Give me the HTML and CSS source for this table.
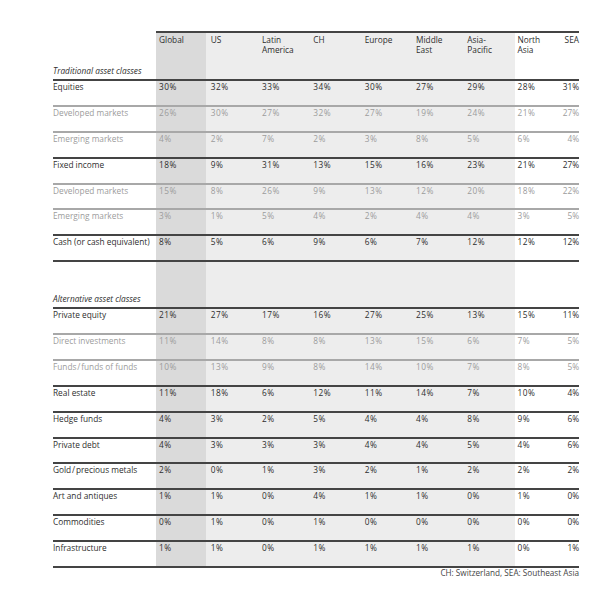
FILE: index.html
```html
<!DOCTYPE html>
<html lang="en">
<head>
<meta charset="utf-8">
<title>Asset allocation by region</title>
<link rel="stylesheet" href="styles.css">
</head>
<body>
<div class="table">
  <div class="head">
    <span class="cap">Traditional asset classes</span>
    <span>Global</span><span>US</span><span>Latin<br>America</span><span>CH</span><span>Europe</span><span>Middle<br>East</span><span>Asia-<br>Pacific</span><span>North<br>Asia</span><span>SEA</span>
  </div>
  <div class="row"><span>Equities</span><span>30%</span><span>32%</span><span>33%</span><span>34%</span><span>30%</span><span>27%</span><span>29%</span><span>28%</span><span>31%</span></div>
  <div class="row sub"><span>Developed markets</span><span>26%</span><span>30%</span><span>27%</span><span>32%</span><span>27%</span><span>19%</span><span>24%</span><span>21%</span><span>27%</span></div>
  <div class="row sub"><span>Emerging markets</span><span>4%</span><span>2%</span><span>7%</span><span>2%</span><span>3%</span><span>8%</span><span>5%</span><span>6%</span><span>4%</span></div>
  <div class="row"><span>Fixed income</span><span>18%</span><span>9%</span><span>31%</span><span>13%</span><span>15%</span><span>16%</span><span>23%</span><span>21%</span><span>27%</span></div>
  <div class="row sub"><span>Developed markets</span><span>15%</span><span>8%</span><span>26%</span><span>9%</span><span>13%</span><span>12%</span><span>20%</span><span>18%</span><span>22%</span></div>
  <div class="row sub"><span>Emerging markets</span><span>3%</span><span>1%</span><span>5%</span><span>4%</span><span>2%</span><span>4%</span><span>4%</span><span>3%</span><span>5%</span></div>
  <div class="row"><span>Cash (or cash equivalent)</span><span>8%</span><span>5%</span><span>6%</span><span>9%</span><span>6%</span><span>7%</span><span>12%</span><span>12%</span><span>12%</span></div>
  <div class="section"><span class="cap">Alternative asset classes</span></div>
  <div class="row"><span>Private equity</span><span>21%</span><span>27%</span><span>17%</span><span>16%</span><span>27%</span><span>25%</span><span>13%</span><span>15%</span><span>11%</span></div>
  <div class="row sub"><span>Direct investments</span><span>11%</span><span>14%</span><span>8%</span><span>8%</span><span>13%</span><span>15%</span><span>6%</span><span>7%</span><span>5%</span></div>
  <div class="row sub"><span>Funds&#8202;/&#8202;funds of funds</span><span>10%</span><span>13%</span><span>9%</span><span>8%</span><span>14%</span><span>10%</span><span>7%</span><span>8%</span><span>5%</span></div>
  <div class="row"><span>Real estate</span><span>11%</span><span>18%</span><span>6%</span><span>12%</span><span>11%</span><span>14%</span><span>7%</span><span>10%</span><span>4%</span></div>
  <div class="row"><span>Hedge funds</span><span>4%</span><span>3%</span><span>2%</span><span>5%</span><span>4%</span><span>4%</span><span>8%</span><span>9%</span><span>6%</span></div>
  <div class="row"><span>Private debt</span><span>4%</span><span>3%</span><span>3%</span><span>3%</span><span>4%</span><span>4%</span><span>5%</span><span>4%</span><span>6%</span></div>
  <div class="row"><span>Gold&#8202;/&#8202;precious metals</span><span>2%</span><span>0%</span><span>1%</span><span>3%</span><span>2%</span><span>1%</span><span>2%</span><span>2%</span><span>2%</span></div>
  <div class="row"><span>Art and antiques</span><span>1%</span><span>1%</span><span>0%</span><span>4%</span><span>1%</span><span>1%</span><span>0%</span><span>1%</span><span>0%</span></div>
  <div class="row"><span>Commodities</span><span>0%</span><span>1%</span><span>0%</span><span>1%</span><span>0%</span><span>0%</span><span>0%</span><span>0%</span><span>0%</span></div>
  <div class="row end"><span>Infrastructure</span><span>1%</span><span>1%</span><span>0%</span><span>1%</span><span>1%</span><span>1%</span><span>1%</span><span>0%</span><span>1%</span></div>
</div>
<p class="note">CH: Switzerland, SEA: Southeast Asia</p>
</body>
</html>
```

FILE: styles.css
```css
html, body {
  margin: 0;
  padding: 0;
  background: #ffffff;
}

body {
  font-family: "Open Sans", "Noto Sans", "Liberation Sans", sans-serif;
  font-size: 8.3px;
  line-height: 10px;
  color: #2e2e2e;
}

.table {
  margin: 31px 0 0 53px;
  width: 526px;
  background: linear-gradient(to right,
    transparent 103px,
    #dadada 103px, #dadada 153px,
    #ededed 153px, #ededed 462px,
    transparent 462px);
}

.head,
.row {
  display: grid;
  grid-template-columns: 103px 50px repeat(6, 51.33px) 1fr 1fr;
  box-sizing: border-box;
}

.head {
  height: 48px;
}

.head > span {
  border-top: 2px solid #444444;
  padding-top: 2px;
}

.head > .cap {
  border-top: none;
  align-self: end;
  padding: 0 0 3px 0;
}

.cap {
  font-style: italic;
  white-space: nowrap;
}

.row {
  height: 25.88px;
  border-top: 2px solid #444444;
  padding-top: 1px;
  white-space: nowrap;
}

.row > :nth-child(n+2) {
  letter-spacing: 0.5px;
}

.row.sub {
  border-top-color: #a8a8a8;
  color: #9c9c9c;
}

.row.end {
  height: 27.88px;
  border-bottom: 2px solid #444444;
}

.head > :nth-child(2),
.row > :nth-child(2) {
  padding-left: 3px;
}

.head > :nth-child(n+3),
.row > :nth-child(n+3) {
  padding-left: 4.7px;
}

.head > :nth-child(9),
.row > :nth-child(9) {
  padding-left: 3.5px;
}

.head > :nth-child(10),
.row > :nth-child(10) {
  padding-left: 0;
  text-align: right;
  letter-spacing: 0;
}

.section {
  box-sizing: border-box;
  height: 47px;
  border-top: 2px solid #444444;
  display: flex;
  align-items: flex-end;
  padding-bottom: 3px;
}

.note {
  margin: 0;
  width: 579px;
  text-align: right;
  font-size: 8.2px;
  line-height: 10px;
  color: #444444;
}
```
